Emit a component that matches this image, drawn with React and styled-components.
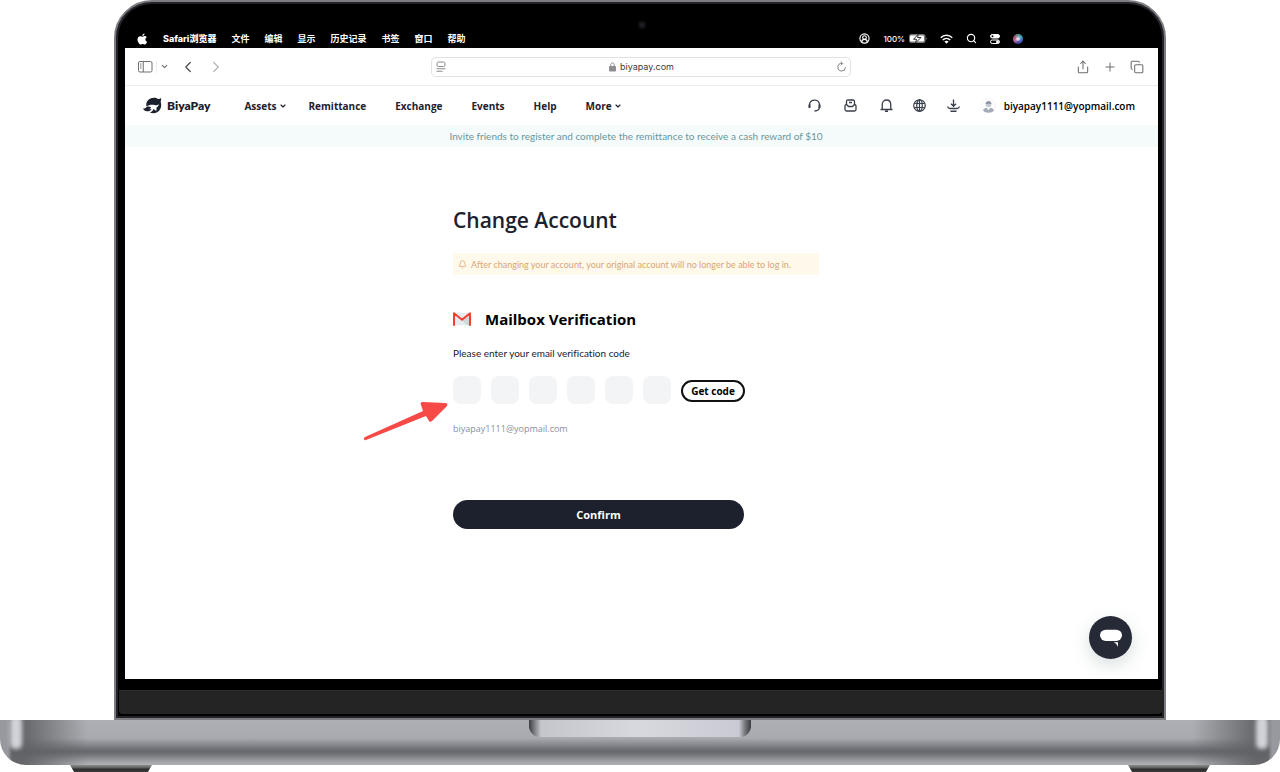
import React, { useState } from 'react';
import styled, { createGlobalStyle } from 'styled-components';
import { Search, CircleUserRound, ChevronDown, ChevronLeft, ChevronRight, Plus, Copy, Share, Bell } from 'lucide-react';

const GlobalStyle = createGlobalStyle`
  * {
    box-sizing: border-box;
  }

  body {
    margin: 0;
    background: #ffffff;
    font-family: Lato, 'Noto Sans CJK SC', sans-serif;
    font-variant-ligatures: none;
    color: #1c212d;
  }

  button,
  input {
    font-family: inherit;
  }
`;

//Laptop
const Laptop = styled.div`
  display: flex;
  flex-direction: column;
  overflow: hidden;
`;

const Lid = styled.div`
  margin: 0 114px;
  padding: 16px 6px 4px 9px;
  border: 2px solid #7d7d81;
  border-radius: 38px 38px 0 0;
  background: #000000;
  box-shadow: inset 0 0 0 2px #232329;
`;

const Camera = styled.div`
  width: 8px;
  height: 8px;
  margin: 3px auto 0;
  border-radius: 50%;
  border: 2px solid #121216;
  background: #1e1e25;
`;

const Screen = styled.div`
  position: relative;
  background: #ffffff;
`;

const Chin = styled.div`
  height: 24px;
  margin: 11px -4px 0 -6px;
  border-top: 1px solid #2e2e2e;
  border-radius: 0 0 4px 4px;
  background: #242424;
`;

const Base = styled.div`
  position: relative;
  height: 45px;
  overflow: hidden;
  border-radius: 0 0 26px 26px;
  background: linear-gradient(90deg, #98999e 0, #98999e 8px, transparent 12px),
    linear-gradient(270deg, #98999e 0, #98999e 8px, transparent 12px),
    linear-gradient(90deg, rgba(96, 97, 101, 0.9) 25px, transparent 88px),
    linear-gradient(270deg, rgba(96, 97, 101, 0.9) 25px, transparent 88px),
    linear-gradient(180deg, #aeafb4 0, #aaabb0 18px, #67686d 31px, #707176 34px, #a3a4a8 42px, #b0b1b4 45px);

  &::before,
  &::after {
    content: '';
    position: absolute;
    top: -4px;
    width: 12px;
    height: 33px;
    border-radius: 5px;
    background: #d2d2d9;
    filter: blur(2px);
  }

  &::before {
    left: 10px;
  }

  &::after {
    right: 12px;
  }
`;

const Notch = styled.div`
  width: 222px;
  height: 17px;
  margin: 0 auto;
  border-radius: 0 0 11px 11px;
  background: linear-gradient(90deg, #3a3b40 0, #77787d 5px, #c5c6cc 12px, #d8d9de 50%, #c9cad3 210px, #77787d 216px, #3a3b40 100%);
`;

const Feet = styled.div`
  display: flex;
  justify-content: space-between;
  padding: 0 70px;
`;

const Foot = styled.div`
  width: 82px;
  height: 7px;
  background: linear-gradient(180deg, #8b8c8c 0, #5a5b5b 3px, #2b2c2b 4px, #3a3b3a 7px);
  clip-path: polygon(0 0, 100% 0, 95% 100%, 5% 100%);
`;

//Menu bar
const MenuBar = styled.div`
  display: flex;
  align-items: center;
  justify-content: space-between;
  height: 19px;
  padding: 0 135px 0 12px;
  color: #ffffff;
  font-family: Inter, 'Noto Sans CJK SC', sans-serif;
  font-size: 9px;
  font-weight: 600;
`;

const MenuGroup = styled.div`
  display: flex;
  align-items: center;
  gap: ${props => props.$gap}px;
`;

const AppName = styled.span`
  font-weight: 800;
`;

const Battery = styled.span`
  display: flex;
  align-items: center;
  gap: 4px;
  font-size: 8px;
  font-weight: 500;
`;

const Siri = styled.span`
  width: 10px;
  height: 10px;
  border-radius: 50%;
  background: radial-gradient(circle, #ffffff 0, rgba(255, 255, 255, 0) 45%),
    conic-gradient(#5c9c8c, #3ba0c8, #4a55c0, #3a3f9a, #c05ca0, #b84a6c, #5c9c8c);
`;

//Browser bar
const BrowserBar = styled.div`
  display: grid;
  grid-template-columns: 1fr 420px 1fr;
  align-items: center;
  height: 38px;
  padding: 0 14px 0 13px;
  border-bottom: 1px solid #ececec;
`;

const BrowserTools = styled.div`
  display: flex;
  align-items: center;
  justify-content: ${props => (props.$end ? 'flex-end' : 'flex-start')};
  gap: ${props => (props.$end ? 13 : 10)}px;
`;

const SidebarTools = styled.div`
  display: flex;
  align-items: center;
  gap: 3px;
`;

const Divider = styled.span`
  width: 1px;
  height: 12px;
  background: #eeeeee;
`;

const IconButton = styled.button`
  display: flex;
  padding: 0;
  border: none;
  background: none;
  color: ${props => props.$color || '#6e6e70'};
  cursor: pointer;
`;

const Address = styled.div`
  display: flex;
  align-items: center;
  justify-content: space-between;
  height: 20px;
  padding: 0 4px;
  border: 1px solid #e2e2e2;
  border-radius: 5px;
  font-family: Inter, sans-serif;
  font-size: 9px;
  color: #3c3c3e;
`;

const Host = styled.span`
  display: flex;
  align-items: center;
  gap: 4px;
`;

//Site header
const Header = styled.header`
  display: flex;
  align-items: center;
  height: 39px;
  padding: 0 23px 0 18px;
`;

const Brand = styled.a`
  display: flex;
  align-items: center;
  gap: 5px;
  margin-right: 34px;
  color: #1c212d;
  font-size: 12px;
  font-weight: 800;
  text-decoration: none;
`;

const Nav = styled.nav`
  display: flex;
  flex: 1;
  gap: 29px;
`;

const NavLink = styled.a`
  display: flex;
  align-items: center;
  gap: 2px;
  margin-right: ${props => (props.$menu ? -7 : 0)}px;
  color: #1c212d;
  font-family: 'Open Sans', sans-serif;
  font-size: 10px;
  font-weight: 700;
  text-decoration: none;
`;

const Actions = styled.div`
  display: flex;
  align-items: center;
  gap: 20px;
`;

const Account = styled.a`
  margin-left: 8px;
  color: #000000;
  font-family: 'Open Sans', sans-serif;
  font-size: 10px;
  font-weight: 600;
  text-decoration: none;
`;

const Banner = styled.div`
  padding: 0 11px 0 0;
  background: #f5fbfb;
  color: #6797a0;
  font-size: 10px;
  line-height: 22px;
  text-align: center;
`;

//Change account form
const Main = styled.main`
  padding: 56px 11px 150px 0;
`;

const Form = styled.form`
  position: relative;
  display: flex;
  flex-direction: column;
  align-items: flex-start;
  width: 366px;
  margin: 0 auto;
`;

const Title = styled.h1`
  margin: 0;
  font-family: 'Open Sans', sans-serif;
  font-size: 21px;
  font-weight: 600;
  line-height: 34px;
`;

const Notice = styled.p`
  display: flex;
  align-items: center;
  gap: 4px;
  width: 100%;
  height: 22px;
  margin: 16px 0 0;
  padding: 0 5px;
  background: #fff9ec;
  color: #d9a577;
  font-size: 9px;
`;

const Section = styled.h2`
  display: flex;
  align-items: center;
  gap: 14px;
  margin: 32px 0 0;
  color: #000000;
  font-family: 'Open Sans', sans-serif;
  font-size: 15px;
  font-weight: 700;
  line-height: 24px;
`;

const Label = styled.label`
  margin-top: 14px;
  font-size: 10px;
  line-height: 16px;
`;

const CodeRow = styled.div`
  display: flex;
  align-items: center;
  gap: 10px;
  margin-top: 15px;
`;

const CodeInput = styled.input`
  width: 28px;
  height: 28px;
  padding: 0;
  border: none;
  border-radius: 8px;
  background: #f3f4f6;
  font-size: 14px;
  text-align: center;
`;

const CodeButton = styled.button`
  width: 64px;
  height: 22px;
  margin-top: 2px;
  padding: 0;
  border: 2px solid #111111;
  border-radius: 11px;
  background: #ffffff;
  color: #000000;
  font-family: 'Open Sans', sans-serif;
  font-size: 10px;
  font-weight: 700;
  white-space: nowrap;
`;

const Email = styled.p`
  margin: 17px 0 0;
  color: #8a8f9c;
  font-family: 'Open Sans', sans-serif;
  font-size: 9px;
  line-height: 16px;
`;

const Confirm = styled.button`
  width: 291px;
  height: 29px;
  margin-top: 63px;
  padding: 0;
  border: none;
  border-radius: 15px;
  background: #1c212d;
  color: #ffffff;
  font-family: 'Open Sans', sans-serif;
  font-size: 11px;
  font-weight: 700;
`;

const Pointer = styled.svg`
  position: absolute;
  top: 197px;
  left: -91px;
`;

const ChatButton = styled.button`
  position: absolute;
  right: 26px;
  bottom: 20px;
  display: flex;
  align-items: center;
  justify-content: center;
  width: 43px;
  height: 43px;
  padding: 0;
  border: none;
  border-radius: 50%;
  background: #262a36;
  box-shadow: 0 6px 18px rgba(60, 90, 90, 0.2);
`;
//styles end

const menus = ['文件', '编辑', '显示', '历史记录', '书签', '窗口', '帮助'];

const links = [
  { name: 'Assets', menu: true },
  { name: 'Remittance' },
  { name: 'Exchange' },
  { name: 'Events' },
  { name: 'Help' },
  { name: 'More', menu: true }
];

const AppleIcon = () => (
  <svg width="11" height="12" viewBox="0 0 22 24" fill="#fff">
    <path d="M15 1c.2 2.800-2 5-4.300 5C10.400 3.500 12.600 1.300 15 1zM19.500 8.400c-4 2.300-3.300 7.600.8 9.100-1 2.700-2.800 5.600-4.900 5.600-1.600 0-2.200-1-4-1s-2.500 1-4 1C4.500 23.100 1 17.500 1 13c0-4.300 2.700-6.700 5.500-6.700 1.900 0 3.200 1.100 4.500 1.100s2.700-1.200 4.900-1.200c1.500 0 2.900.8 3.600 2.200z" />
  </svg>
);

const BatteryIcon = () => (
  <svg width="18" height="9" viewBox="0 0 36 18">
    <rect x="0" y="0" width="33" height="18" rx="5" fill="#777" />
    <rect x="2" y="3" width="28" height="12" rx="2" fill="#fff" />
    <path d="M19 0 9 10.500h6L13 18l11-11h-7z" fill="#fff" stroke="#333" strokeWidth="2" />
    <path d="M34 6.500v5c2-.5 2-4.500 0-5z" fill="#777" />
  </svg>
);

const WifiIcon = () => (
  <svg width="13" height="10" viewBox="0 0 26 20" fill="none" stroke="#fff" strokeWidth="3">
    <path d="M1.500 7.500c6.500-6.500 16.500-6.500 23 0M5.500 12c4.300-4.300 10.700-4.300 15 0" />
    <path d="M13 19.500 8.800 15.200c2.400-2.200 6-2.200 8.400 0z" fill="#fff" stroke="none" />
  </svg>
);

const ControlIcon = () => (
  <svg width="10" height="10" viewBox="0 0 20 20" fill="none" stroke="#fff" strokeWidth="2">
    <rect x="1" y="1" width="18" height="7" rx="3.500" fill="#fff" />
    <circle cx="5" cy="4.500" r="2" fill="#000" stroke="none" />
    <rect x="1" y="12" width="18" height="7" rx="3.500" />
    <circle cx="15" cy="15.500" r="3" fill="#fff" stroke="none" />
  </svg>
);

const SidebarIcon = () => (
  <svg width="15" height="12" viewBox="0 0 30 24" fill="none" stroke="currentColor" strokeWidth="2">
    <rect x="1" y="1" width="27" height="21" rx="3" />
    <path d="M10.500 1v21M4 6h3M4 10h3M4 14h3" />
  </svg>
);

const ReaderIcon = () => (
  <svg width="10" height="12" viewBox="0 0 20 24" fill="none" stroke="#8a8a8c" strokeWidth="2">
    <rect x="2" y="2" width="16" height="9" rx="3" />
    <path d="M1 15.500h18M1 20.500h12" />
  </svg>
);

const LockIcon = () => (
  <svg width="7" height="10" viewBox="0 0 14 20">
    <rect x="0" y="8" width="14" height="11" rx="2" fill="#8e8e90" />
    <path d="M3.500 9V5.500c0-5 7-5 7 0V9" fill="none" stroke="#8e8e90" strokeWidth="2" />
  </svg>
);

const ReloadIcon = () => (
  <svg width="9" height="11" viewBox="0 0 18 22" fill="none" stroke="currentColor" strokeWidth="1.800">
    <path d="M10 5a7.500 7.500 0 1 0 6.800 7.500M7.500 1l4 4-4 4" />
  </svg>
);

const LogoIcon = () => (
  <svg width="19" height="17" viewBox="0 0 57 51">
    <path d="M10 28C8 12 19 2 33 2c5 0 9 1 12 4 4 0 7-1 9-4 1 5 0 9-1 12 6 18-5 34-21 35-5 0-9-1-12-3 6-1 10-5 11-10l9 6 1-11c4-2 6-5 7-9-5 3-9 3-13 2-9-2-16-1-25 4z" fill="#1c212d" />
    <path d="M0 35c5 0 9-3 11-6 4-1 8-1 13 1-1 4-3 6-6 7 3 0 5 0 8-1-4 8-19 11-26-1z" fill="#1c212d" />
  </svg>
);

const HeadsetIcon = () => (
  <svg width="13" height="13" viewBox="0 0 26 26" fill="none" stroke="currentColor" strokeWidth="2.600">
    <path d="M3 16v-4C3-1 23-1 23 12v3c0 6-4 9-10 9" />
    <path d="M3 11v7M23 11v7" strokeWidth="4" />
  </svg>
);

const InboxIcon = () => (
  <svg width="13" height="13" viewBox="0 0 26 26" fill="none" stroke="currentColor" strokeWidth="2.600">
    <path d="M5 10V5c0-2 1-3 3-3h10c2 0 3 1 3 3v5M10 7h6" />
    <path d="M5 11c-2 0-3 1-3 3v7c0 2 1 3 3 3h16c2 0 3-1 3-3v-7c0-2-1-3-3-3l-4 4H9z" />
  </svg>
);

const BellIcon = () => (
  <svg width="13" height="13" viewBox="0 0 26 26" fill="none" stroke="currentColor" strokeWidth="2.600">
    <path d="M1 21h24M4.500 21V11c0-12 17-12 17 0v10M10 24.500h6" />
  </svg>
);

const GlobeIcon = () => (
  <svg width="13" height="13" viewBox="0 0 26 26" fill="none" stroke="currentColor" strokeWidth="2.400">
    <circle cx="13" cy="13" r="11.500" />
    <ellipse cx="13" cy="13" rx="5.500" ry="11.500" />
    <path d="M13 1.500v23M2.500 9h21M2.500 17h21" />
  </svg>
);

const DownloadIcon = () => (
  <svg width="13" height="13" viewBox="0 0 26 26" fill="none" stroke="currentColor" strokeWidth="2.600">
    <path d="M13 1v13M8 9.500l5 5 5-5M1 15c1 3 2.500 4 5 4h14c2.500 0 4-1 5-4M7 24.500h12" />
  </svg>
);

const Avatar = () => (
  <svg width="15" height="15" viewBox="0 0 30 30">
    <circle cx="15" cy="15" r="14.500" fill="#fbfbfc" stroke="#f1f1f3" />
    <circle cx="15" cy="13" r="5.500" fill="#c4c9d1" />
    <path d="M9 12c0-8 12-8 12 0z" fill="#8f98a6" />
    <path d="M4 25c2-6 7-5 11-5s9-1 11 5c-5 6-17 6-22 0z" fill="#a3abb8" />
    <path d="M12 20h6l-3 5z" fill="#fff" />
  </svg>
);

const MailIcon = () => (
  <svg width="18" height="14" viewBox="0 0 54 42">
    <path d="M3 2h48v38H3z" fill="#e9ecef" />
    <path d="M27 25 50 6v34H42z" fill="#d3d7db" />
    <path d="M3 39V4l24 19L51 4v35" fill="none" stroke="#ef4136" strokeWidth="6" strokeLinejoin="round" strokeLinecap="round" />
  </svg>
);

const ChatIcon = () => (
  <svg width="22" height="18" viewBox="0 0 66 54" fill="#fff">
    <rect x="0" y="2" width="66" height="34" rx="17" />
    <path d="M40 40h14v14c-2-6-6-11-14-14z" />
  </svg>
);

const App = () => {
  const [code, setCode] = useState(['', '', '', '', '', '']);

  const handleChange = (index, value) => {
    setCode(code.map((digit, i) => (i === index ? value : digit)));
  };

  return (
    <Laptop>
      <GlobalStyle />
      <Lid>
        <Camera />
        <MenuBar>
          <MenuGroup $gap={15}>
            <AppleIcon />
            <AppName>Safari浏览器</AppName>
            {menus.map(menu => (
              <span key={menu}>{menu}</span>
            ))}
          </MenuGroup>
          <MenuGroup $gap={13}>
            <CircleUserRound size={11} strokeWidth={2.5} />
            <Battery>
              100%
              <BatteryIcon />
            </Battery>
            <WifiIcon />
            <Search size={11} strokeWidth={2.5} />
            <ControlIcon />
            <Siri />
          </MenuGroup>
        </MenuBar>
        <Screen>
          <BrowserBar>
            <BrowserTools>
              <SidebarTools>
                <IconButton aria-label="Sidebar">
                  <SidebarIcon />
                </IconButton>
                <Divider />
                <IconButton aria-label="Tab groups">
                  <ChevronDown size={9} strokeWidth={3} />
                </IconButton>
              </SidebarTools>
              <IconButton aria-label="Back" $color="#4a4a4c">
                <ChevronLeft size={18} strokeWidth={1.6} />
              </IconButton>
              <IconButton aria-label="Forward" $color="#b4b4b6">
                <ChevronRight size={18} strokeWidth={1.6} />
              </IconButton>
            </BrowserTools>
            <Address>
              <ReaderIcon />
              <Host>
                <LockIcon />
                biyapay.com
              </Host>
              <IconButton aria-label="Reload">
                <ReloadIcon />
              </IconButton>
            </Address>
            <BrowserTools $end>
              <IconButton aria-label="Share">
                <Share size={14} strokeWidth={1.8} />
              </IconButton>
              <IconButton aria-label="New tab">
                <Plus size={14} strokeWidth={1.8} />
              </IconButton>
              <IconButton aria-label="Tabs">
                <Copy size={14} strokeWidth={1.8} />
              </IconButton>
            </BrowserTools>
          </BrowserBar>
          <Header>
            <Brand href="#">
              <LogoIcon />
              BiyaPay
            </Brand>
            <Nav>
              {links.map(link => (
                <NavLink href="#" key={link.name} $menu={link.menu}>
                  {link.name}
                  {link.menu && <ChevronDown size={8} strokeWidth={3.5} />}
                </NavLink>
              ))}
            </Nav>
            <Actions>
              <MenuGroup $gap={23}>
                <IconButton aria-label="Support" $color="#3a3f4b">
                  <HeadsetIcon />
                </IconButton>
                <IconButton aria-label="Orders" $color="#3a3f4b">
                  <InboxIcon />
                </IconButton>
                <IconButton aria-label="Notifications" $color="#3a3f4b">
                  <BellIcon />
                </IconButton>
              </MenuGroup>
              <MenuGroup $gap={21}>
                <IconButton aria-label="Language" $color="#3a3f4b">
                  <GlobeIcon />
                </IconButton>
                <IconButton aria-label="Download" $color="#3a3f4b">
                  <DownloadIcon />
                </IconButton>
                <Avatar />
              </MenuGroup>
            </Actions>
            <Account href="#">biyapay1111@yopmail.com</Account>
          </Header>
          <Banner>Invite friends to register and complete the remittance to receive a cash reward of $10</Banner>
          <Main>
            <Form onSubmit={event => event.preventDefault()}>
              <Title>Change Account</Title>
              <Notice>
                <Bell size={9} strokeWidth={2} />
                After changing your account, your original account will no longer be able to log in.
              </Notice>
              <Section>
                <MailIcon />
                Mailbox Verification
              </Section>
              <Label htmlFor="code0">Please enter your email verification code</Label>
              <CodeRow>
                {code.map((digit, index) => (
                  <CodeInput
                    key={index}
                    id={`code${index}`}
                    type="text"
                    maxLength={1}
                    aria-label={`Digit ${index + 1}`}
                    value={digit}
                    onChange={event => handleChange(index, event.target.value)}
                  />
                ))}
                <CodeButton type="button">Get code</CodeButton>
              </CodeRow>
              <Email>biyapay1111@yopmail.com</Email>
              <Confirm type="submit">Confirm</Confirm>
              <Pointer width="86" height="42" viewBox="0 0 86 42">
                <path
                  d="M3 37 61 11 59 5c-1-2 0-3 2-3l22 1c2 0 3 1 2 3L70 21c-1 1-3 1-3 0l-3-5L4 40c-2 1-3-2-1-3z"
                  fill="#f74a46"
                />
              </Pointer>
            </Form>
          </Main>
          <ChatButton aria-label="Chat">
            <ChatIcon />
          </ChatButton>
        </Screen>
        <Chin />
      </Lid>
      <Base>
        <Notch />
      </Base>
      <Feet>
        <Foot />
        <Foot />
      </Feet>
    </Laptop>
  );
};

export default App;
